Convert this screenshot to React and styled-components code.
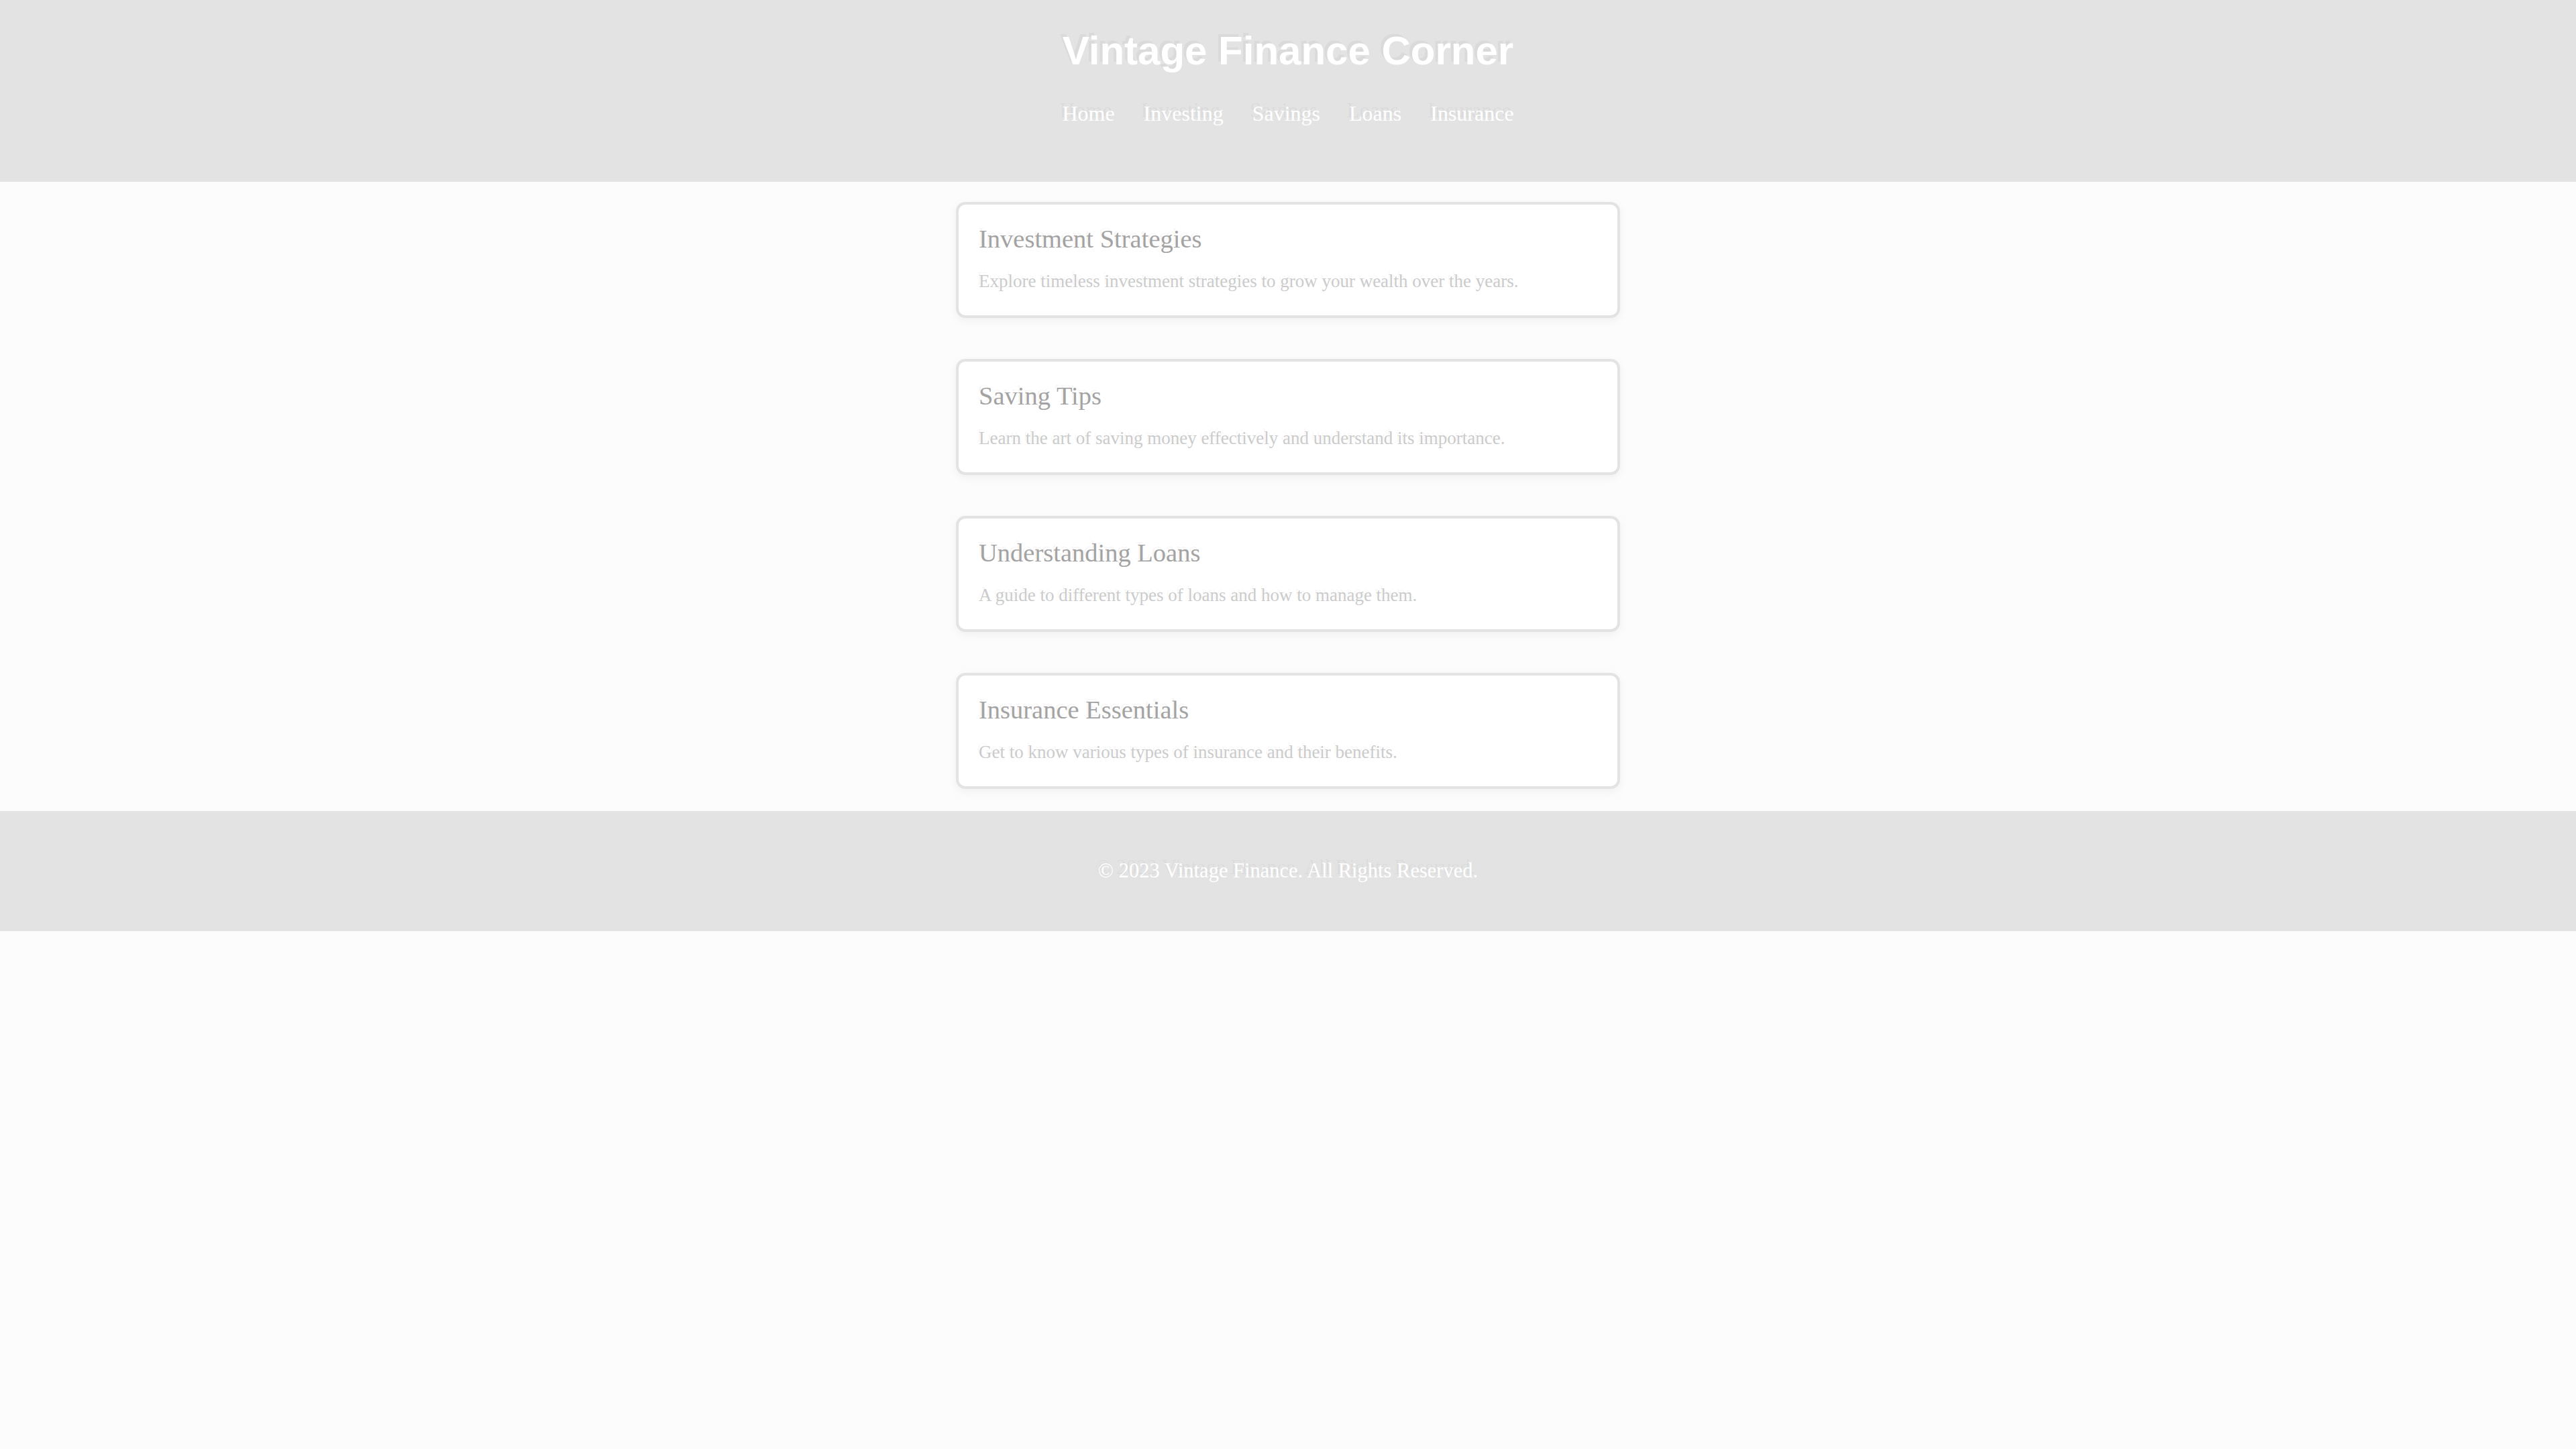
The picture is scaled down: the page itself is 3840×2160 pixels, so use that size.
import React from 'react'
import styled, { createGlobalStyle } from 'styled-components'

const GlobalStyle = createGlobalStyle`
  html, body {
    margin: 0;
    padding: 0;
    background: #fcfcfc;
    font-family: "Liberation Serif", "Times New Roman", serif;
  }
  * {
    box-sizing: border-box;
  }
`

const Header = styled.header`
  background: #e3e3e3;
  height: 271px;
  padding-top: 41px;
  display: flex;
  flex-direction: column;
  align-items: center;
`

const Title = styled.h1`
  margin: 0;
  font-family: "Liberation Sans", Arial, sans-serif;
  font-weight: 700;
  font-size: 60px;
  line-height: 70px;
  color: #ffffff;
  text-shadow: -4px -4px 0 rgba(0, 0, 0, 0.04);
`

const Nav = styled.nav`
  margin-top: 38px;
  display: flex;
  gap: 43px;
`

const NavLink = styled.a`
  font-size: 32px;
  line-height: 40px;
  color: #ffffff;
  text-decoration: none;
  text-shadow: -4px -5px 0 rgba(0, 0, 0, 0.05);
`

const Main = styled.main`
  padding: 30px 0 33px;
  display: flex;
  flex-direction: column;
  align-items: center;
  gap: 61px;
`

const Card = styled.section`
  width: 990px;
  height: 173px;
  background: #ffffff;
  border: 4px solid #e3e3e3;
  border-radius: 14px;
  box-shadow: 0 4px 14px rgba(0, 0, 0, 0.05);
  padding: 29px 28px 32px 30px;
`

const CardTitle = styled.h2`
  margin: 0;
  font-weight: 400;
  font-size: 38.5px;
  line-height: 44px;
  color: #a3a3a3;
  text-shadow: -3px -4px 0 rgba(0, 0, 0, 0.04);
`

const CardText = styled.p`
  margin: 23px 0 0;
  font-size: 27px;
  line-height: 36px;
  color: #cbcbcb;
  text-shadow: -3px -4px 0 rgba(0, 0, 0, 0.03);
`

const Footer = styled.footer`
  background: #e3e3e3;
  height: 179px;
  display: flex;
  align-items: center;
  justify-content: center;
`

const FooterText = styled.p`
  margin: 0;
  font-size: 30.5px;
  color: #ffffff;
  text-shadow: -4px -5px 0 rgba(0, 0, 0, 0.04);
`

const links = ['Home', 'Investing', 'Savings', 'Loans', 'Insurance']

const articles = [
  {
    title: 'Investment Strategies',
    text: 'Explore timeless investment strategies to grow your wealth over the years.',
  },
  {
    title: 'Saving Tips',
    text: 'Learn the art of saving money effectively and understand its importance.',
  },
  {
    title: 'Understanding Loans',
    text: 'A guide to different types of loans and how to manage them.',
  },
  {
    title: 'Insurance Essentials',
    text: 'Get to know various types of insurance and their benefits.',
  },
]

const App = () => {
  return (
    <>
      <GlobalStyle />
      <Header>
        <Title>Vintage Finance Corner</Title>
        <Nav>
          {links.map((link) => (
            <NavLink key={link} href="#">{link}</NavLink>
          ))}
        </Nav>
      </Header>
      <Main>
        {articles.map((item) => (
          <Card key={item.title}>
            <CardTitle>{item.title}</CardTitle>
            <CardText>{item.text}</CardText>
          </Card>
        ))}
      </Main>
      <Footer>
        <FooterText>© 2023 Vintage Finance. All Rights Reserved.</FooterText>
      </Footer>
    </>
  )
}

export default App
